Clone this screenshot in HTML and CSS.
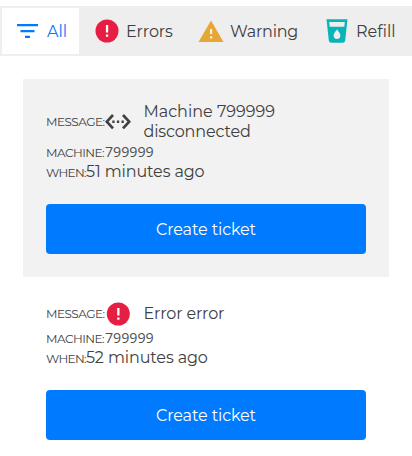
FILE: index.html
```html
<!DOCTYPE html>
<html lang="en">
<head>
<meta charset="utf-8">
<title>Machine alerts</title>
<link rel="stylesheet" href="styles.css">
</head>
<body>
<nav class="tabs">
  <a class="tab tab-all active"><svg width="22" height="16" viewBox="0 0 22 16" fill="currentColor"><path d="M0 1h21v2.300H0zM3.500 7h14v2.200h-14zM8 12.800h5V15H8z"/></svg><span>All</span></a>
  <a class="tab tab-errors"><svg width="24" height="24" viewBox="0 0 24 24"><circle cx="12" cy="12" r="11.500" fill="#e61e43"/><path d="M10.900 6h2.300v7.500h-2.300zM10.900 15.500h2.300v2.300h-2.300z" fill="#fff"/></svg><span>Errors</span></a>
  <a class="tab tab-warning"><svg width="26" height="24" viewBox="0 0 26 24"><path d="M13 1.500 25.500 23H.5z" fill="#e8a735"/><path d="M12 10h2.200v5H12zM12 17.200h2.200v2.300H12z" fill="#f4f1e9"/></svg><span>Warning</span></a>
  <a class="tab tab-refill"><svg width="22" height="24" viewBox="0 0 22 24"><path fill="#07b5b8" fill-rule="evenodd" d="M.5.300h21L19.200 21.500q-.3 2.300-2.500 2.300H5.300q-2.200 0-2.500-2.300zM3.200 3l.5 4.700h14.600l.5-4.700zM11 10.500c-2 2.500-3.400 4.300-3.400 6.100a3.400 3.400 0 0 0 6.800 0c0-1.800-1.400-3.600-3.400-6.100z"/></svg><span>Refill</span></a>
</nav>
<main class="alerts">
  <article class="alert shaded">
    <div class="row message"><span class="label label-message">MESSAGE:</span><svg class="icon" width="26" height="24" viewBox="0 0 26 24"><path d="m8 5-6.200 6.700L8 18.400M18 5l6.200 6.700-6.200 6.700" fill="none" stroke="#414141" stroke-width="2.700"/><path d="M7.300 10.600h2.300v2.300H7.300zM11.900 10.600h2.300v2.300h-2.300zM16.500 10.600h2.300v2.300h-2.300z" fill="#414141"/></svg><p class="title">Machine 799999<br><span class="state">disconnected</span></p></div>
    <div class="row machine"><span class="label label-machine">MACHINE:</span><span class="number">799999</span></div>
    <div class="row when"><span class="label label-when">WHEN:</span><span class="time">51 minutes ago</span></div>
    <button class="ticket">Create ticket</button>
  </article>
  <article class="alert">
    <div class="row message short"><span class="label label-message">MESSAGE:</span><svg class="icon" width="26" height="24" viewBox="0 0 26 24"><circle cx="13.300" cy="12" r="11.500" fill="#e61e43"/><path d="M12.200 6h2.300v7.500h-2.300zM12.200 15.500h2.300v2.300h-2.300z" fill="#fff"/></svg><p class="title"><span class="error-title">Error error</span></p></div>
    <div class="row machine"><span class="label label-machine">MACHINE:</span><span class="number">799999</span></div>
    <div class="row when"><span class="label label-when">WHEN:</span><span class="time">52 minutes ago</span></div>
    <button class="ticket">Create ticket</button>
  </article>
</main>
</body>
</html>
```
FILE: styles.css
```css
* { box-sizing: border-box; }
body { margin: 0; padding-top: 6px; background: #fff; color: #404040; font: 16px/20px Montserrat, Inter, sans-serif; overflow: hidden; }
svg { display: block; flex: none; }
.tabs { display: flex; height: 50px; padding: 2px; background: #eee; }
.tab { display: flex; align-items: center; height: 46px; white-space: nowrap; flex: none; }
.tab span { padding-top: 1px; }
.tab-all { width: 77px; padding-left: 15px; gap: 8px; background: #fff; color: #007bff; }
.tab-errors { width: 105px; padding-left: 16px; gap: 7px; letter-spacing: -0.1px; }
.tab-warning { width: 127px; padding-left: 14px; gap: 6px; letter-spacing: -0.2px; }
.tab-refill { width: 99px; padding-left: 15px; gap: 8px; }
.alerts { margin: 23px 23px 0; }
.alert { padding: 23px; }
.shaded { height: 198px; background: #f2f2f2; }
.row { display: flex; white-space: nowrap; }
.message { height: 40px; align-items: center; }
.short { height: 28px; }
.label { font-size: 12px; letter-spacing: -0.5px; flex: none; }
.label-message, .label-machine { width: 59px; }
.label-when { width: 40px; letter-spacing: -0.65px; padding-top: 1px; }
.title { margin: 0 0 0 12.500px; }
.state { letter-spacing: -0.15px; }
.error-title { letter-spacing: -0.15px; }
.machine { height: 19px; margin-top: 1px; align-items: center; }
.when { height: 20px; align-items: center; }
.number { padding-bottom: 1px; color: #505050; font: 300 14.200px/18px "Open Sans", "Noto Sans", sans-serif; font-weight: 400; }
.time { letter-spacing: -0.12px; }
.ticket { display: block; width: 320px; height: 50px; margin-top: 22px; padding: 2px 0 0; border: 0; border-radius: 4px; background: #007bff; color: #fff; font: inherit; letter-spacing: -0.12px; }
```
